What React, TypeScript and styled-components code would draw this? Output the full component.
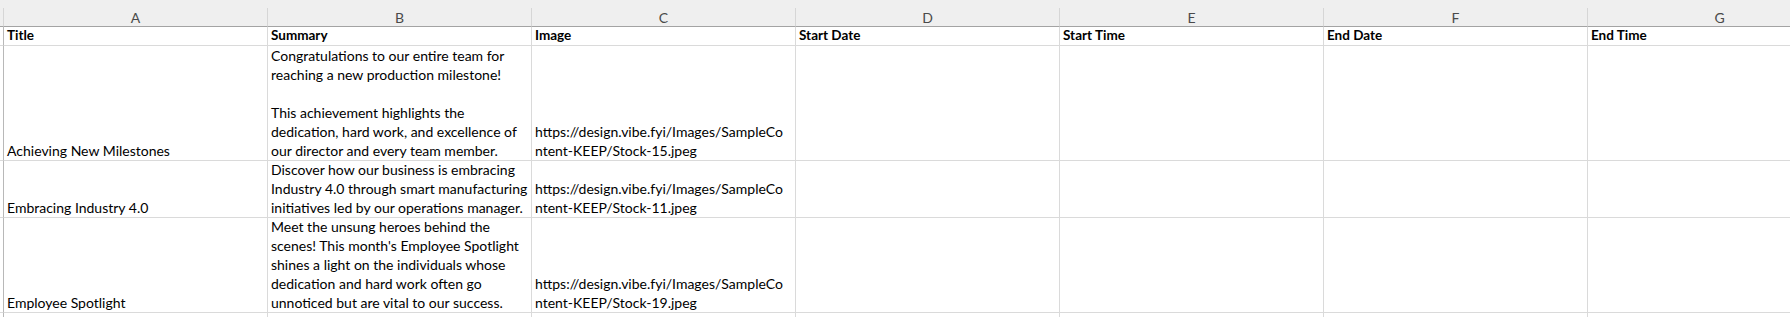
import React from 'react';
import styled, { createGlobalStyle } from 'styled-components';

const COL_WIDTH = 264;
const LINE = 19;

const columns = ['A', 'B', 'C', 'D', 'E', 'F', 'G'];
const headings = ['Title', 'Summary', 'Image', 'Start Date', 'Start Time', 'End Date', 'End Time'];

type Row = { height: number; cells: string[][] };

const rows: Row[] = [
  {
    height: 115,
    cells: [
      ['Achieving New Milestones'],
      [
        'Congratulations to our entire team for',
        'reaching a new production milestone!',
        '',
        'This achievement highlights the',
        'dedication, hard work, and excellence of',
        'our director and every team member.',
      ],
      ['https://design.vibe.fyi/Images/SampleCo', 'ntent-KEEP/Stock-15.jpeg'],
    ],
  },
  {
    height: 57,
    cells: [
      ['Embracing Industry 4.0'],
      [
        'Discover how our business is embracing',
        'Industry 4.0 through smart manufacturing',
        'initiatives led by our operations manager.',
      ],
      ['https://design.vibe.fyi/Images/SampleCo', 'ntent-KEEP/Stock-11.jpeg'],
    ],
  },
  {
    height: 95,
    cells: [
      ['Employee Spotlight'],
      [
        'Meet the unsung heroes behind the',
        "scenes! This month's Employee Spotlight",
        'shines a light on the individuals whose',
        'dedication and hard work often go',
        'unnoticed but are vital to our success.',
      ],
      ['https://design.vibe.fyi/Images/SampleCo', 'ntent-KEEP/Stock-19.jpeg'],
    ],
  },
  { height: LINE, cells: [] },
];

const GlobalStyle = createGlobalStyle`
  html, body {
    margin: 0;
    padding: 0;
    background: #ffffff;
  }
  body {
    font-family: Lato, "Liberation Sans", sans-serif;
    -webkit-font-smoothing: antialiased;
  }
`;

const Viewport = styled.div`
  width: 100vw;
  height: 317px;
  overflow: hidden;
  background: #ffffff;
`;

const TopStrip = styled.div`
  height: 8px;
  background: #efefef;
`;

const Grid = styled.div<{ $rows: string }>`
  display: grid;
  grid-template-columns: 4px repeat(${columns.length}, ${COL_WIDTH}px);
  grid-template-rows: ${({ $rows }) => $rows};
`;

const Stub = styled.div<{ $head?: boolean }>`
  box-sizing: border-box;
  background: ${({ $head }) => ($head ? '#efefef' : '#ffffff')};
  border-right: 1px solid ${({ $head }) => ($head ? '#d6d6d6' : '#b8b8b8')};
  border-bottom: 1px solid ${({ $head }) => ($head ? '#a3a3a3' : '#dadada')};
`;

const ColumnHead = styled.div`
  box-sizing: border-box;
  display: flex;
  align-items: center;
  justify-content: center;
  padding-top: 1px;
  background: #efefef;
  border-right: 1px solid #d6d6d6;
  border-bottom: 1px solid #a3a3a3;
  color: #4a4a4a;
  font-size: 14px;
  line-height: 1;
`;

const Cell = styled.div<{ $bold?: boolean }>`
  box-sizing: border-box;
  display: flex;
  flex-direction: column;
  justify-content: flex-end;
  padding: 0 2px 0 3px;
  border-right: 1px solid #dadada;
  border-bottom: 1px solid #dadada;
  color: #000000;
  font-size: ${({ $bold }) => ($bold ? '13.5px' : '14px')};
  font-weight: ${({ $bold }) => ($bold ? 700 : 400)};
  line-height: ${LINE}px;
  white-space: pre;
  min-width: 0;
`;

const Line = styled.span`
  display: block;
  height: ${LINE}px;
`;

export default function App() {
  const template = ['19px', '19px', ...rows.map((r) => `${r.height}px`)].join(' ');

  return (
    <Viewport>
      <GlobalStyle />
      <TopStrip />
      <Grid $rows={template}>
        <Stub $head />
        {columns.map((c) => (
          <ColumnHead key={c}>{c}</ColumnHead>
        ))}

        <Stub />
        {headings.map((h) => (
          <Cell key={h} $bold>
            <Line>{h}</Line>
          </Cell>
        ))}

        {rows.map((row, ri) => (
          <React.Fragment key={ri}>
            <Stub />
            {columns.map((c, ci) => (
              <Cell key={c}>
                {(row.cells[ci] ?? []).map((text, li) => (
                  <Line key={li}>{text}</Line>
                ))}
              </Cell>
            ))}
          </React.Fragment>
        ))}
      </Grid>
    </Viewport>
  );
}
